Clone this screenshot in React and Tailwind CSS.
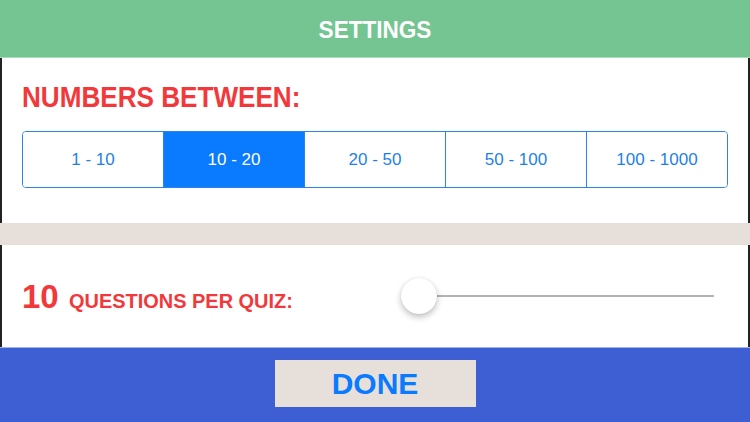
import { useState } from 'react'

const RANGES = ['1 - 10', '10 - 20', '20 - 50', '50 - 100', '100 - 1000']

export default function App() {
  const [range, setRange] = useState(1)
  const [count, setCount] = useState(10)

  return (
    <div className="w-[750px] h-[422px] flex flex-col overflow-hidden bg-white" style={{ fontFamily: '"Liberation Sans", Arial, sans-serif' }}>
      {/* Header */}
      <div className="h-[58px] shrink-0 bg-[#75c592] border-b border-[#a9dcbb] flex items-center justify-center">
        <h1 className="text-white font-bold text-[24px] scale-x-[0.94] mt-[2px]">SETTINGS</h1>
      </div>

      {/* Range section */}
      <div className="h-[165px] shrink-0 border-x-2 border-[#222] px-[20px] pt-[24px]">
        <p className="inline-block text-[#f2383a] font-bold text-[30px] leading-none scale-x-[0.87] origin-left">NUMBERS BETWEEN:</p>
        <div className="mt-[17px] h-[57px] flex border border-[#2a84ea] rounded-[4px] overflow-hidden">
          {RANGES.map((r, i) => (
            <button
              key={r}
              onClick={() => setRange(i)}
              className={`flex-1 flex items-center justify-center text-[17px] ${i > 0 ? 'border-l border-[#2a84ea]' : ''} ${range === i ? 'bg-[#0a7aff] text-white' : 'bg-white text-[#1f7fe8]'}`}
            >
              {r}
            </button>
          ))}
        </div>
      </div>

      {/* Divider strip */}
      <div className="h-[22px] shrink-0 bg-[#e6dfda]" />

      {/* Questions section */}
      <div className="h-[102px] shrink-0 border-x-2 border-[#222] pl-[20px] pr-[34px] flex items-center">
        <div className="flex items-baseline text-[#f2383a] font-bold">
          <span className="text-[33px] leading-none">{count}</span>
          <span className="inline-block text-[21px] ml-[10px] leading-none scale-x-[0.95] origin-left">QUESTIONS PER QUIZ:</span>
        </div>
        <div className="ml-auto w-[313px] h-[36px] relative flex items-center">
          <div className="w-full h-[2px] bg-[#b3b3b3] ml-[18px]" />
          <div className="absolute left-0 top-0 w-[36px] h-[36px] rounded-full bg-white shadow-[0_3px_6px_rgba(0,0,0,0.25),0_0_1px_rgba(0,0,0,0.15)]" />
        </div>
      </div>

      {/* Footer */}
      <div className="flex-1 bg-[#3e5fd3] border-t border-[#9fb4ef] flex justify-center pt-[12px]">
        <button onClick={() => setCount(count)} className="w-[201px] h-[47px] bg-[#e7e0da] flex items-center justify-center text-[#0a7aff] font-bold text-[30px]">
          DONE
        </button>
      </div>
    </div>
  )
}
